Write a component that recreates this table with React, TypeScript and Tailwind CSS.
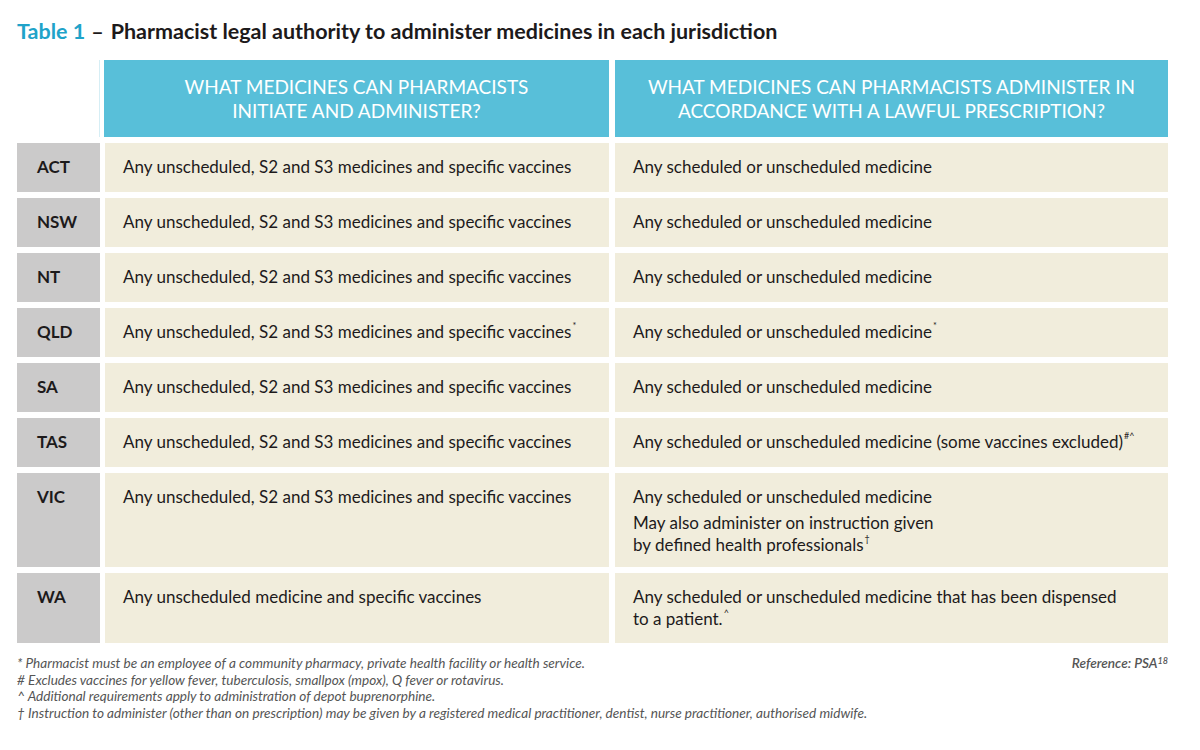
import * as React from "react"

type Row = {
  code: string
  h: string
  left: React.ReactNode
  right: React.ReactNode
}

const base = "Any unscheduled, S2 and S3 medicines and specific vaccines"
const sched = "Any scheduled or unscheduled medicine"

const Sup = ({ children }: { children: React.ReactNode }) => (
  <sup className="relative -top-[2px] ml-[1px] text-[9px] align-super">{children}</sup>
)

const rows: Row[] = [
  { code: "ACT", h: "h-[49px]", left: base, right: sched },
  { code: "NSW", h: "h-[49px]", left: base, right: sched },
  { code: "NT", h: "h-[49px]", left: base, right: sched },
  {
    code: "QLD",
    h: "h-[49px]",
    left: (
      <>
        {base}
        <Sup>*</Sup>
      </>
    ),
    right: (
      <>
        {sched}
        <Sup>*</Sup>
      </>
    ),
  },
  { code: "SA", h: "h-[49px]", left: base, right: sched },
  {
    code: "TAS",
    h: "h-[49px]",
    left: base,
    right: (
      <>
        {sched} (some vaccines excluded)
        <Sup>#^</Sup>
      </>
    ),
  },
  {
    code: "VIC",
    h: "h-[94px]",
    left: base,
    right: (
      <>
        <p>{sched}</p>
        <p className="mt-[4px]">
          May also administer on instruction given
          <br />
          by defined health professionals
          <Sup>†</Sup>
        </p>
      </>
    ),
  },
  {
    code: "WA",
    h: "h-[70px]",
    left: "Any unscheduled medicine and specific vaccines",
    right: (
      <>
        Any scheduled or unscheduled medicine that has been dispensed
        <br />
        to a patient.
        <Sup>^</Sup>
      </>
    ),
  },
]

export default function App() {
  return (
    <div className="h-[750px] w-[1200px] bg-white font-['Lato',sans-serif] text-[#1d1a1b]">
      <div className="px-[17px] pt-[17px]">
        <h1 className="flex items-baseline text-[21.5px] font-bold leading-[28px]">
          <span className="text-[#1fa3c9]">Table 1</span>
          <span className="ml-[6px] mr-[7px]">–</span>
          <span>Pharmacist legal authority to administer medicines in each jurisdiction</span>
        </h1>

        <div className="mt-[15px] grid grid-cols-[83px_509px_559px]">
          <div className="border-r border-[#d6eef5]" />
          <div className="ml-[4px] flex h-[77px] flex-col items-center justify-center bg-[#58bfd9] text-center text-[19px] uppercase leading-[24px] text-white">
            <span>What medicines can pharmacists</span>
            <span>initiate and administer?</span>
          </div>
          <div className="ml-[6px] flex h-[77px] flex-col items-center justify-center bg-[#58bfd9] text-center text-[19px] uppercase leading-[24px] text-white">
            <span>What medicines can pharmacists administer in</span>
            <span>accordance with a lawful prescription?</span>
          </div>

          {rows.map((r) => (
            <React.Fragment key={r.code}>
              <div className={`mt-[6px] ${r.h} bg-[#cbcaca] pl-[20px] pt-[13px] text-[17px] font-bold leading-[22px]`}>
                {r.code}
              </div>
              <div className={`ml-[5px] mt-[6px] ${r.h} bg-[#f1eddc] pl-[18px] pt-[13px] text-[17px] leading-[22px]`}>
                {r.left}
              </div>
              <div className={`ml-[6px] mt-[6px] ${r.h} bg-[#f1eddc] pl-[18px] pt-[13px] text-[17px] leading-[22px]`}>
                {r.right}
              </div>
            </React.Fragment>
          ))}
        </div>

        <div className="mt-[12px] flex w-[1151px] justify-between text-[13.6px] italic leading-[16.5px] text-[#555555]">
          <div>
            <p>* Pharmacist must be an employee of a community pharmacy, private health facility or health service.</p>
            <p># Excludes vaccines for yellow fever, tuberculosis, smallpox (mpox), Q fever or rotavirus.</p>
            <p>^ Additional requirements apply to administration of depot buprenorphine.</p>
            <p>
              † Instruction to administer (other than on prescription) may be given by a registered medical practitioner,
              dentist, nurse practitioner, authorised midwife.
            </p>
          </div>
          <div className="font-semibold">
            Reference: PSA<sup className="text-[9px]">18</sup>
          </div>
        </div>
      </div>
    </div>
  )
}
